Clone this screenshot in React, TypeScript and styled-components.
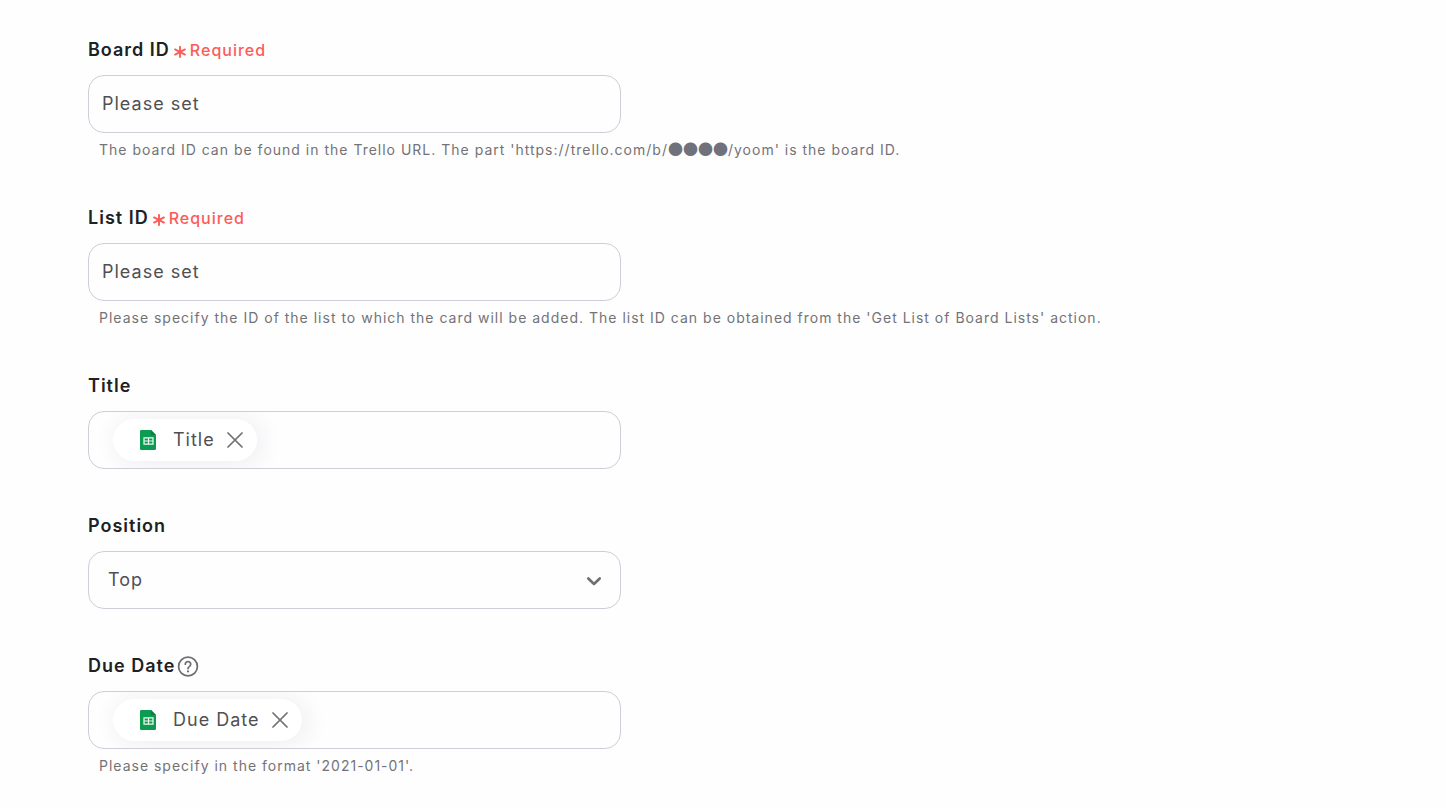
import React from "react";
import styled, { createGlobalStyle } from "styled-components";

const GlobalStyle = createGlobalStyle`
  *, *::before, *::after { box-sizing: border-box; }
  body {
    margin: 0;
    background: #fefefe;
    color: #202124;
    font-family: Inter, "Noto Sans CJK JP", sans-serif;
    font-size: 18px;
    letter-spacing: 1px;
  }
  input, select, button { font: inherit; letter-spacing: inherit; color: inherit; }
`;

const Form = styled.form`
  display: flex;
  flex-direction: column;
  gap: 44px;
  padding: 37px 88px 30px;
`;

const Field = styled.div`
  display: flex;
  flex-direction: column;
`;

const LabelRow = styled.div`
  display: flex;
  align-items: center;
  height: 26px;
  margin-bottom: 12px;
`;

const Label = styled.label`
  font-weight: 600;
  line-height: 24px;
`;

const Required = styled.span`
  display: flex;
  align-items: center;
  gap: 4px;
  margin-left: 4px;
  color: #fc5c58;
  font-size: 16px;
  font-weight: 500;
  line-height: 24px;

  svg { margin-top: 4px; }
`;

const controlBox = `
  width: 100%;
  max-width: 533px;
  height: 58px;
  border: 1px solid #cfced8;
  border-radius: 16px;
  background: #fefefe;
  color: #505054;
`;

const TextInput = styled.input`
  ${controlBox}
  padding: 0 13px 2px;
  &::placeholder { color: #505054; opacity: 1; }
`;

const TokenBox = styled.div`
  ${controlBox}
  display: flex;
  align-items: center;
  padding: 0 14px 0 24px;
  overflow: hidden;
`;

const Token = styled.span`
  display: flex;
  align-items: center;
  flex: none;
  height: 42px;
  padding: 0 14px 0 27px;
  border-radius: 21px;
  background: #fff;
  box-shadow: 4px 2px 24px rgba(60, 30, 90, 0.09);
`;

const TokenText = styled.span`
  margin: 0 12px 0 17px;
  line-height: 24px;
`;

const IconButton = styled.button`
  display: flex;
  flex: none;
  padding: 0;
  border: 0;
  background: none;
  color: #6f6f73;
  cursor: pointer;
`;

const HelpButton = styled(IconButton)`
  margin-left: 2px;
`;

const InlineInput = styled.input`
  flex: 1;
  min-width: 0;
  height: 40px;
  padding: 0 8px;
  border: 0;
  outline: 0;
  background: transparent;
`;

const SelectWrap = styled.div`
  position: relative;
  width: 100%;
  max-width: 533px;
`;

const Select = styled.select`
  ${controlBox}
  display: block;
  appearance: none;
  padding: 0 48px 2px 19px;
`;

const Chevron = styled.svg`
  position: absolute;
  right: 18px;
  top: 21px;
  pointer-events: none;
`;

const Help = styled.p`
  margin: 6px 0 0;
  padding-left: 11px;
  color: #737377;
  font-size: 14px;
  line-height: 22px;
`;

const Mask = styled.span`
  color: #6f717b;
  font-family: "Noto Sans CJK JP", sans-serif;
  font-size: 15px;
  letter-spacing: normal;
  line-height: 1;
`;

const Asterisk = () => (
  <svg width="12" height="12" viewBox="0 0 12 12" fill="none" stroke="currentColor" strokeWidth="1.9" strokeLinecap="round" aria-hidden="true">
    <path d="M6 0.9v10.2M1.1 3.4l9.8 5.2M10.9 3.4l-9.8 5.2" />
  </svg>
);

const SheetIcon = () => (
  <svg width="16" height="20" viewBox="0 0 16 20" aria-hidden="true">
    <path d="M1.2 0H11l5 5v13.8a1.2 1.2 0 0 1-1.2 1.2H1.2A1.2 1.2 0 0 1 0 18.8V1.2A1.2 1.2 0 0 1 1.2 0Z" fill="#0b9b51" />
    <path d="M11 0l5 5h-3.8A1.2 1.2 0 0 1 11 3.8Z" fill="#087f40" />
    <path d="M4 7.8h9v6.4H4ZM8.500 7.8v6.4M4 11h9" fill="none" stroke="#eefaf2" strokeWidth="1.2" />
  </svg>
);

const Close = () => (
  <svg width="16" height="16" viewBox="0 0 16 16" fill="none" stroke="currentColor" strokeWidth="1.7" strokeLinecap="round" aria-hidden="true">
    <path d="M1 1l14 14M15 1L1 15" />
  </svg>
);

const HelpIcon = () => (
  <svg width="22" height="22" viewBox="0 0 22 22" fill="none" stroke="currentColor" strokeWidth="1.8" strokeLinecap="round" aria-hidden="true">
    <circle cx="11" cy="11.500" r="9.4" />
    <path d="M8.300 9.200a2.700 2.600 0 1 1 4.500 1.900c-1 .8-1.800 1.300-1.800 2.400" strokeWidth="1.8" />
    <circle cx="11" cy="16.400" r="1.100" fill="currentColor" stroke="none" />
  </svg>
);

interface FieldProps {
  id: string;
  label: string;
  required?: boolean;
  tip?: string;
  help?: React.ReactNode;
  children: React.ReactNode;
}

const FormField = ({ id, label, required, tip, help, children }: FieldProps) => (
  <Field>
    <LabelRow>
      <Label htmlFor={id}>{label}</Label>
      {required && <Required><Asterisk />Required</Required>}
      {tip && <HelpButton type="button" aria-label={tip}><HelpIcon /></HelpButton>}
    </LabelRow>
    {children}
    {help && <Help id={`${id}-help`}>{help}</Help>}
  </Field>
);

const TokenField = ({ id, token }: { id: string; token: string }) => (
  <TokenBox>
    <Token>
      <SheetIcon />
      <TokenText>{token}</TokenText>
      <IconButton type="button" aria-label={`Remove ${token}`}><Close /></IconButton>
    </Token>
    <InlineInput id={id} type="text" />
  </TokenBox>
);

export default function App() {
  return (
    <>
      <GlobalStyle />
      <Form>
        <FormField
          id="board"
          label="Board ID"
          required
          help={<>The board ID can be found in the Trello URL. The part 'https://trello.com/b/<Mask>●●●●</Mask>/yoom' is the board ID.</>}
        >
          <TextInput id="board" type="text" placeholder="Please set" aria-describedby="board-help" />
        </FormField>
        <FormField
          id="list"
          label="List ID"
          required
          help="Please specify the ID of the list to which the card will be added. The list ID can be obtained from the 'Get List of Board Lists' action."
        >
          <TextInput id="list" type="text" placeholder="Please set" aria-describedby="list-help" />
        </FormField>
        <FormField id="title" label="Title">
          <TokenField id="title" token="Title" />
        </FormField>
        <FormField id="position" label="Position">
          <SelectWrap>
            <Select id="position" defaultValue="top">
              <option value="top">Top</option>
              <option value="bottom">Bottom</option>
            </Select>
            <Chevron width="18" height="18" viewBox="0 0 18 18" fill="none" stroke="#6f6f73" strokeWidth="2.6" strokeLinecap="round" strokeLinejoin="round" aria-hidden="true">
              <path d="M3.300 6.500L9 12l5.700-5.500" />
            </Chevron>
          </SelectWrap>
        </FormField>
        <FormField id="due" label="Due Date" tip="About the due date" help="Please specify in the format '2021-01-01'.">
          <TokenField id="due" token="Due Date" />
        </FormField>
      </Form>
    </>
  );
}
